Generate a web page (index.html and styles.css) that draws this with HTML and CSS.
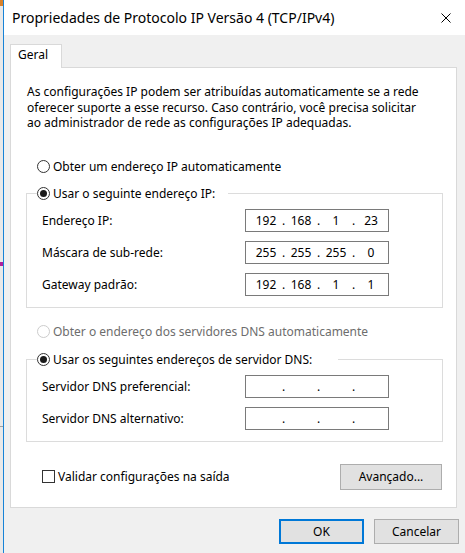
FILE: index.html
```html
<!DOCTYPE html>
<html lang="pt-BR">
<head>
<meta charset="utf-8">
<title>Propriedades de Protocolo IP Versão 4 (TCP/IPv4)</title>
<link rel="stylesheet" href="styles.css">
</head>
<body>
<div class="screen">
  <div class="behind"><span class="mark mark-a"></span><span class="mark mark-b"></span><span class="mark mark-c"></span></div>
  <div class="dialog">
    <div class="titlebar">
      <span class="title">Propriedades de Protocolo IP Versão 4 (TCP/IPv4)</span>
      <svg class="close" width="10" height="10" viewBox="0 0 10 10" aria-label="Fechar"><path d="M0.5 0.5 L9.5 9.5 M9.5 0.5 L0.5 9.5" stroke="#000" stroke-width="1" fill="none"/></svg>
    </div>
    <div class="client">
      <div class="tabs"><div class="tab">Geral</div></div>
      <div class="panel">
        <p class="desc">As configurações IP podem ser atribuídas automaticamente se a rede<br>oferecer suporte a esse recurso. Caso contrário, você precisa solicitar<br>ao administrador de rede as configurações IP adequadas.</p>

        <div class="option option-first"><span class="radio"></span><span>Obter um endereço IP automaticamente</span></div>

        <fieldset class="group group-ip">
          <legend class="legend legend-ip"><span class="option"><span class="radio checked"></span><span>Usar o seguinte endereço IP:</span></span></legend>
          <div class="field-row"><span class="field-label">Endereço IP:</span>
            <div class="ipbox"><span class="oct">192</span><span class="dot">.</span><span class="oct">168</span><span class="dot">.</span><span class="oct">1</span><span class="dot">.</span><span class="oct">23</span></div>
          </div>
          <div class="field-row"><span class="field-label">Máscara de sub-rede:</span>
            <div class="ipbox"><span class="oct">255</span><span class="dot">.</span><span class="oct">255</span><span class="dot">.</span><span class="oct">255</span><span class="dot">.</span><span class="oct">0</span></div>
          </div>
          <div class="field-row"><span class="field-label">Gateway padrão:</span>
            <div class="ipbox"><span class="oct">192</span><span class="dot">.</span><span class="oct">168</span><span class="dot">.</span><span class="oct">1</span><span class="dot">.</span><span class="oct">1</span></div>
          </div>
        </fieldset>

        <div class="option option-dns disabled"><span class="radio"></span><span>Obter o endereço dos servidores DNS automaticamente</span></div>

        <fieldset class="group group-dns">
          <legend class="legend legend-dns"><span class="option"><span class="radio checked"></span><span>Usar os seguintes endereços de servidor DNS:</span></span></legend>
          <div class="field-row"><span class="field-label">Servidor DNS preferencial:</span>
            <div class="ipbox"><span class="oct"></span><span class="dot">.</span><span class="oct"></span><span class="dot">.</span><span class="oct"></span><span class="dot">.</span><span class="oct"></span></div>
          </div>
          <div class="field-row"><span class="field-label">Servidor DNS alternativo:</span>
            <div class="ipbox"><span class="oct"></span><span class="dot">.</span><span class="oct"></span><span class="dot">.</span><span class="oct"></span><span class="dot">.</span><span class="oct"></span></div>
          </div>
        </fieldset>

        <div class="footer">
          <div class="check-option"><span class="check"></span><span>Validar configurações na saída</span></div>
          <button class="btn btn-adv" type="button">Avançado...</button>
        </div>
      </div>
      <div class="actions">
        <button class="btn btn-default" type="button">OK</button>
        <button class="btn" type="button">Cancelar</button>
      </div>
    </div>
  </div>
</div>
</body>
</html>
```

FILE: styles.css
```css
* { box-sizing: border-box; }
html, body { margin: 0; padding: 0; }
body {
  width: 465px;
  height: 553px;
  overflow: hidden;
  background: #f0f0f0;
  color: #000;
  font-family: "Noto Sans", "Liberation Sans", sans-serif;
  font-size: 12px;
}
.screen { display: flex; width: 465px; height: 553px; }
.behind {
  width: 3px;
  flex: none;
  background: #e9e9e9;
  display: flex;
  flex-direction: column;
}
.mark { display: block; width: 3px; }
.mark-a { height: 6px; background: #d9822b; }
.mark-b { height: 4px; margin-top: 256px; background: #b0209a; }
.mark-c { height: 1px; margin-top: 160px; background: #a0a0a0; }

.dialog {
  flex: 1;
  border-left: 1px solid #1883d7;
  background: #f0f0f0;
  display: flex;
  flex-direction: column;
}
.titlebar {
  height: 35px;
  flex: none;
  background: #fff;
  display: flex;
  align-items: center;
  padding-left: 8px;
}
.title { font-size: 14px; color: #000; white-space: nowrap; }
.close { margin-left: auto; margin-right: 14px; flex: none; }

.client { flex: 1; padding: 9px 0 0 6px; }
.tabs { display: flex; }
.tab {
  width: 52px;
  height: 24px;
  background: #fff;
  border: 1px solid #d9d9d9;
  border-bottom: none;
  margin-bottom: -1px;
  position: relative;
  z-index: 1;
  padding-left: 7px;
  line-height: 20px;
}
.panel {
  width: 447px;
  height: 441px;
  background: #fff;
  border: 1px solid #d9d9d9;
  padding: 0 13px 0 15px;
}
.desc {
  margin: 16px 0 0 1px;
  line-height: 15.5px;
  white-space: nowrap;
}
.option {
  display: flex;
  align-items: center;
  height: 17px;
  white-space: nowrap;
}
.option-first { margin: 27px 0 0 11px; }
.option-dns { margin: 15px 0 0 11px; }
.disabled { color: #6d6d6d; }
.radio {
  width: 13px;
  height: 13px;
  flex: none;
  border: 1px solid #333;
  border-radius: 50%;
  margin-right: 3px;
  display: flex;
  align-items: center;
  justify-content: center;
  background: #fff;
}
.disabled .radio { border-color: #cccccc; }
.radio.checked::after {
  content: "";
  width: 7px;
  height: 7px;
  border-radius: 50%;
  background: #1a1a1a;
}
.group {
  margin: 10px 0 0;
  border: 1px solid #dcdcdc;
  padding: 7px 0 11px 10px;
  min-width: 0;
}
.group-dns { margin-top: 11px; }
.legend { padding: 0; }
.legend-ip { width: 191px; }
.legend-dns { width: 301px; }
.field-row {
  display: flex;
  align-items: center;
  height: 23px;
  margin-left: 5px;
}
.field-row + .field-row { margin-top: 9px; }
.field-label { width: 203px; flex: none; }
.ipbox {
  width: 144px;
  height: 23px;
  border: 1px solid #7a7a7a;
  background: #fff;
  display: flex;
  align-items: center;
  padding-left: 6px;
}
.oct { width: 28px; text-align: center; }
.dot { width: 7px; text-align: center; }

.footer {
  display: flex;
  align-items: center;
  justify-content: space-between;
  height: 26px;
  margin-top: 22px;
}
.check-option { display: flex; align-items: center; margin-left: 16px; }
.check {
  width: 13px;
  height: 13px;
  border: 1px solid #333;
  background: #fff;
  margin-right: 3px;
}
.btn {
  font: inherit;
  color: #000;
  background: #e1e1e1;
  border: 1px solid #adadad;
  padding: 0;
  width: 85px;
  height: 25px;
}
.btn-adv { width: 102px; height: 26px; margin-right: 1px; }
.btn-default { border: 2px solid #0078d7; }
.actions {
  display: flex;
  justify-content: flex-end;
  gap: 10px;
  margin-top: 11px;
  padding-right: 6px;
}
```
